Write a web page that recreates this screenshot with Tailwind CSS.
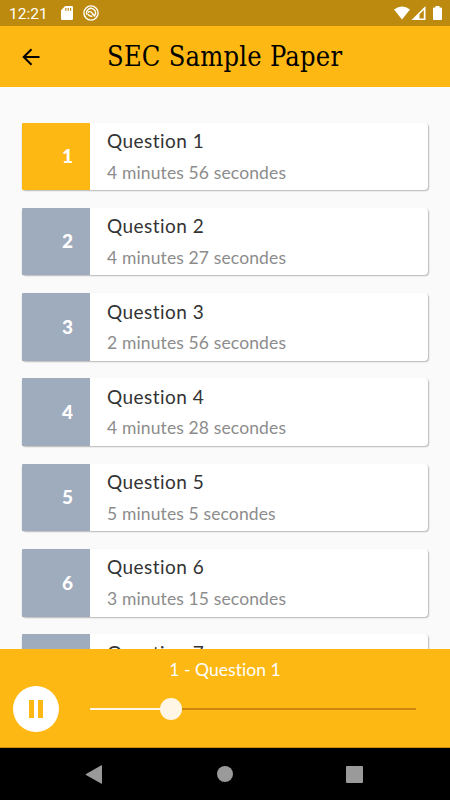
<!DOCTYPE html>
<html lang="en">
<head>
<meta charset="utf-8">
<title>SEC Sample Paper</title>
<script src="https://cdn.jsdelivr.net/npm/@tailwindcss/browser@4"></script>
</head>
<body class="w-[450px] h-[800px] overflow-hidden flex flex-col bg-[#fafafa] font-['Lato',sans-serif]">
<div class="h-[26px] shrink-0 bg-[#bc8a0e] flex items-center pl-[9px] pr-[8px] text-white">
  <span class="w-[52px] font-['Roboto',sans-serif] text-[15.5px] leading-[26px] pt-[2px]">12:21</span>
  <svg class="w-[12px] h-[14px]" viewBox="0 0 12 14" fill="currentColor"><path fill-rule="evenodd" d="M4.2 0H10.8Q12 0 12 1.2V12.8Q12 14 10.8 14H1.2Q0 14 0 12.8V4.2ZM4.2 2V4.8H5.4V2ZM6.6 2V4.8H7.8V2ZM9 2V4.8H10.2V2Z"/></svg>
  <svg class="w-[16px] h-[16px] ml-[10px]" viewBox="0 0 16 16" fill="none" stroke="currentColor"><circle cx="8" cy="8" r="7.1" stroke-width="1.4"/><path d="M4.2 10A4.4 4.4 0 1 1 11.7 10.4" stroke-width="1.4"/><path d="M5 7.4Q7.4 5.5 9 8L12 11.5M5 9Q6.2 12 9.4 11" stroke-width="1.4"/></svg>
  <svg class="w-[16px] h-[14px] ml-auto" viewBox="0 0 16 14" fill="currentColor"><path d="M0 3.5Q8-2.5 16 3.5L8 13.5Z"/></svg>
  <svg class="w-[15px] h-[14px] ml-[1px]" viewBox="0 0 15 14"><path fill="white" fill-rule="evenodd" d="M.5 14 14.5 0V14ZM8.5 8.2V12.4H12.8V3.9Z"/></svg>
  <svg class="w-[9px] h-[14px] ml-[7px]" viewBox="0 0 9 14" fill="currentColor"><path d="M2.5 0H6.5V1.5H8Q9 1.5 9 2.5V13Q9 14 8 14H1Q0 14 0 13V2.5Q0 1.5 1 1.5H2.5Z"/></svg>
</div>
<header class="h-[61px] shrink-0 bg-[#fdb813] flex items-center pl-[22px]">
  <svg class="w-[18px] h-[18px] shrink-0" viewBox="0 0 18 18" fill="none" stroke="black" stroke-width="2"><path d="M17.5 9H2M9.5 1.2 1.7 9 9.5 16.8"/></svg>
  <h1 class="ml-[67px] font-['DejaVu_Serif_Condensed','DejaVu_Serif',serif] text-[27px] leading-[40px] tracking-[0.25px] pt-[1px] whitespace-nowrap text-black">SEC Sample Paper</h1>
</header>
<main id="list" class="flex-1 min-h-0 overflow-hidden pt-[35.6px] pl-[22px] pr-[22px] flex flex-col gap-[17.8px]"></main>
<section class="h-[99px] shrink-0 bg-[#fdb813] border-b border-[#c98d08]">
  <div class="h-[37px] text-center text-white text-[17.5px] leading-[41px] tracking-[0.05px]">1 - Question 1</div>
  <div class="flex items-center h-[46px] pl-[13px] pr-[34px]">
    <div class="w-[46px] h-[46px] rounded-full bg-white flex items-center justify-center gap-[4.5px]">
      <i class="w-[5px] h-[18px] bg-[#fdb813]"></i><i class="w-[5px] h-[18px] bg-[#fdb813]"></i>
    </div>
    <div class="ml-[31px] flex-1 flex items-center">
      <div class="w-[70px] h-[2.5px] bg-[#fff6e5]"></div>
      <div class="w-[22px] h-[22px] rounded-full bg-[#fff6e5]"></div>
      <div class="flex-1 h-[2px] bg-[#cf860d]"></div>
    </div>
  </div>
</section>
<nav class="h-[52px] shrink-0 bg-black flex items-center pl-[85px] text-[#9a9a9a]">
  <svg class="w-[17px] h-[19px]" viewBox="0 0 17 19" fill="currentColor"><path d="M16 .5Q17 0 17 1V18Q17 19 16 18.5L1 10Q0 9.5 1 9Z"/></svg>
  <div class="w-[16px] h-[16px] rounded-full bg-[#9a9a9a] ml-[115px]"></div>
  <div class="w-[17px] h-[17px] rounded-[1px] bg-[#9a9a9a] ml-[113px]"></div>
</nav>
<script>
const durations = ['4 minutes 56 secondes','4 minutes 27 secondes','2 minutes 56 secondes','4 minutes 28 secondes','5 minutes 5 secondes','3 minutes 15 secondes',''];
document.getElementById('list').innerHTML = durations.map((d, i) => `
  <article class="h-[67.5px] shrink-0 flex rounded-[4px] bg-white shadow-[0.5px_1px_1.5px_rgba(0,0,0,0.27)]">
    <div class="w-[67.5px] rounded-l-[1px] ${i === 0 ? 'bg-[#fdb813]' : 'bg-[#9facbe]'} flex items-center justify-end pr-[16.5px] text-white font-black text-[19px]">${i < 6 ? i + 1 : ''}</div>
    <div class="pl-[17.5px] whitespace-nowrap">
      <h2 class="text-[19px] leading-[24px] pt-[6.4px] tracking-[0.47px] text-[#333]">Question ${i + 1}</h2>
      <p class="text-[17.5px] leading-[24px] pt-[7.6px] tracking-[0.13px] text-[#8c8c8c]">${d}</p>
    </div>
  </article>`).join('');
</script>
</body>
</html>
